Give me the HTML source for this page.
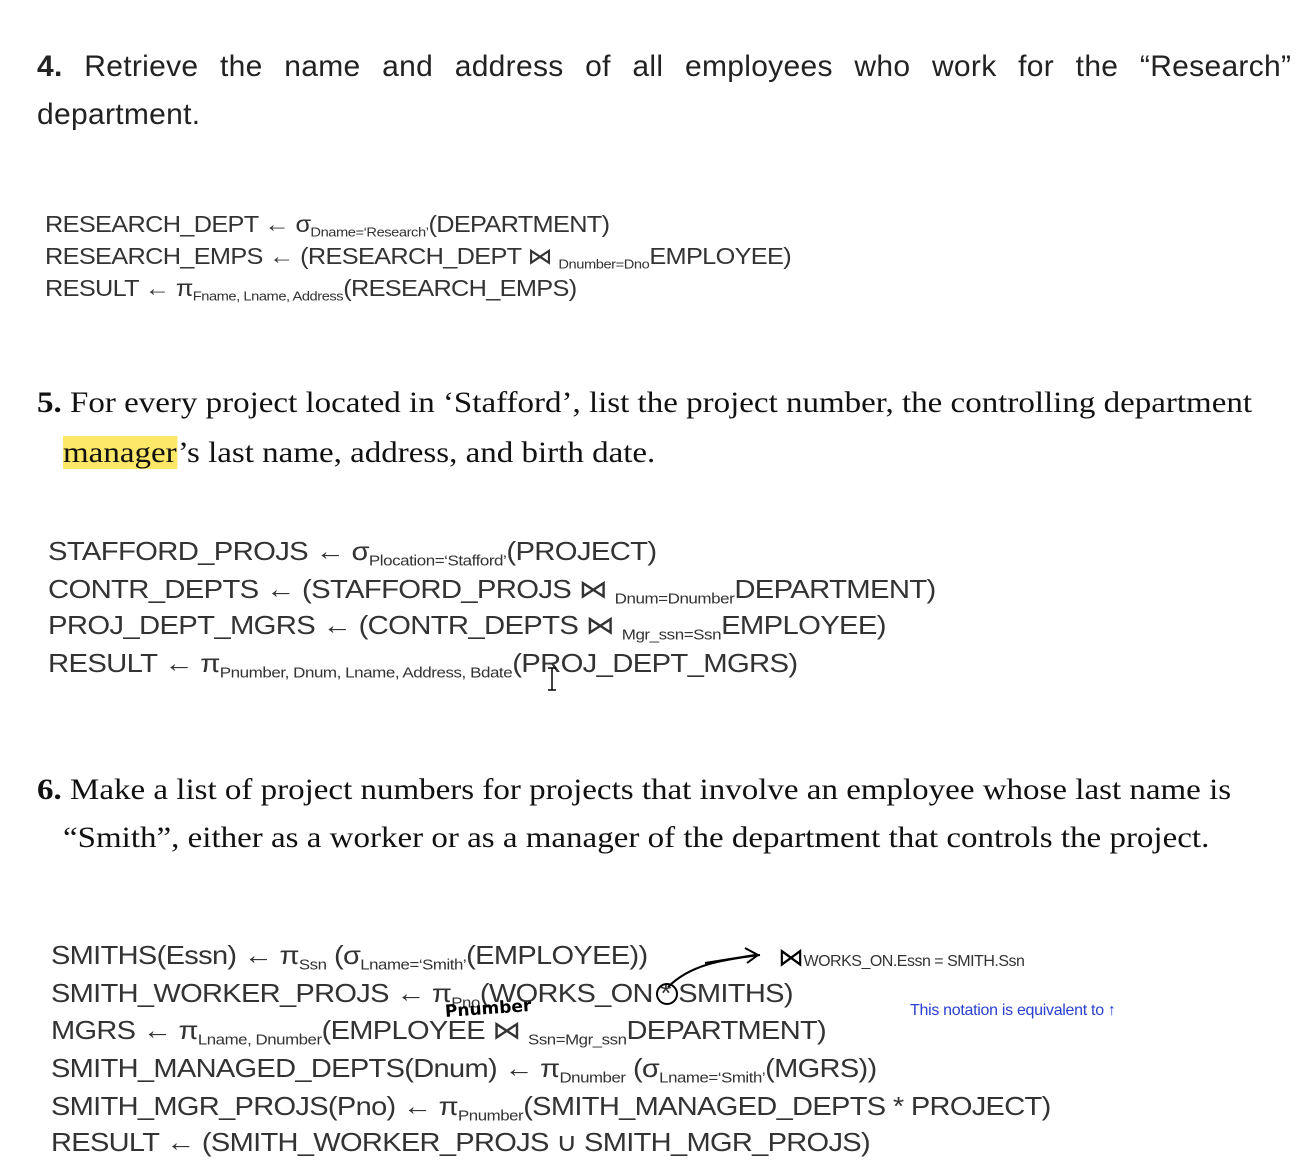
<!DOCTYPE html>
<html><head><meta charset="utf-8"><style>
body{margin:0;background:#fff;width:1308px;height:1176px;position:relative;overflow:hidden}
.l{position:absolute;white-space:nowrap;line-height:40px;transform-origin:0 50%}
.h{font-family:"Liberation Sans",sans-serif;font-size:30px;color:#222;letter-spacing:0.3px}
.s{font-family:"Liberation Serif",serif;font-size:30px;color:#111;transform:scaleX(1.1)}
.f{font-family:"Liberation Sans",sans-serif;color:#333;letter-spacing:-0.6px}
.f4{font-size:23px;transform:scaleX(1.1)}
.f5{font-size:26px;transform:scaleX(1.126)}
.f6{font-size:26px;transform:scaleX(1.116)}
sub{font-size:0.58em;vertical-align:-0.35em;letter-spacing:-0.4px}
</style></head><body>
<div class="l h" style="left:37px;top:47px;word-spacing:13px"><b>4.</b> Retrieve the name and address of all employees who work for the “Research”</div>
<div class="l h" style="left:37px;top:95px">department.</div>

<div class="l f f4" style="left:45px;top:204px">RESEARCH_DEPT ← σ<sub>Dname=‘Research’</sub>(DEPARTMENT)</div>
<div class="l f f4" style="left:45px;top:236px">RESEARCH_EMPS ← (RESEARCH_DEPT ⋈ <sub>Dnumber=Dno</sub>EMPLOYEE)</div>
<div class="l f f4" style="left:45px;top:268px">RESULT ← π<sub>Fname, Lname, Address</sub>(RESEARCH_EMPS)</div>

<div class="l s" style="left:37px;top:383px"><b>5.</b> For every project located in ‘Stafford’, list the project number, the controlling department</div>
<div class="l s" style="left:63px;top:433px"><span style="background:#fde868">manager</span>’s last name, address, and birth date.</div>

<div class="l f f5" style="left:48px;top:531px">STAFFORD_PROJS ← σ<sub>Plocation=‘Stafford’</sub>(PROJECT)</div>
<div class="l f f5" style="left:48px;top:569px">CONTR_DEPTS ← (STAFFORD_PROJS ⋈ <sub>Dnum=Dnumber</sub>DEPARTMENT)</div>
<div class="l f f5" style="left:48px;top:605px">PROJ_DEPT_MGRS ← (CONTR_DEPTS ⋈ <sub>Mgr_ssn=Ssn</sub>EMPLOYEE)</div>
<div class="l f f5" style="left:48px;top:643px">RESULT ← π<sub>Pnumber, Dnum, Lname, Address, Bdate</sub>(PROJ_DEPT_MGRS)</div>

<div class="l s" style="left:37px;top:770px"><b>6.</b> Make a list of project numbers for projects that involve an employee whose last name is</div>
<div class="l s" style="left:63px;top:818px">“Smith”, either as a worker or as a manager of the department that controls the project.</div>

<div class="l f f6" style="left:51px;top:935px">SMITHS(Essn) ← π<sub>Ssn</sub> (σ<sub>Lname=‘Smith’</sub>(EMPLOYEE))</div>
<div class="l f f6" style="left:51px;top:973px">SMITH_WORKER_PROJS ← π<sub>Pno</sub>(WORKS_ON * SMITHS)</div>
<div class="l f f6" style="left:51px;top:1010px">MGRS ← π<sub>Lname, Dnumber</sub>(EMPLOYEE ⋈ <sub>Ssn=Mgr_ssn</sub>DEPARTMENT)</div>
<div class="l f f6" style="left:51px;top:1048px">SMITH_MANAGED_DEPTS(Dnum) ← π<sub>Dnumber</sub> (σ<sub>Lname=‘Smith’</sub>(MGRS))</div>
<div class="l f f6" style="left:51px;top:1086px">SMITH_MGR_PROJS(Pno) ← π<sub>Pnumber</sub>(SMITH_MANAGED_DEPTS * PROJECT)</div>
<div class="l f f6" style="left:51px;top:1122px">RESULT ← (SMITH_WORKER_PROJS ∪ SMITH_MGR_PROJS)</div>

<div class="l" style="left:778px;top:937px;font-family:'Liberation Sans',sans-serif;color:#333;font-size:16px;letter-spacing:-0.5px"><span style="font-size:26px;color:#000">⋈</span>WORKS_ON.Essn = SMITH.Ssn</div>
<div class="l" style="left:910px;top:991px;font-family:'Liberation Sans',sans-serif;color:#2a3fd0;font-size:16px;letter-spacing:-0.3px">This notation is equivalent to ↑</div>
<div class="l" style="left:445px;top:992px;font-family:'DejaVu Sans',sans-serif;font-size:17px;font-weight:bold;color:#000;transform:rotate(-4deg)">Pnumber</div>
<svg width="1308" height="1176" style="position:absolute;left:0;top:0" fill="none" stroke="#000" stroke-width="2">
<path d="M705 963 L755 955 M745 948 L758 955 L747 963"/>
<path d="M668 987 C690 965 720 960 760 955"/>
<circle cx="667" cy="994" r="10"/>
<path d="M552 668 L552 690 M548 668 L556 668 M548 690 L556 690" stroke-width="1.5"/>
</svg>
</body></html>
